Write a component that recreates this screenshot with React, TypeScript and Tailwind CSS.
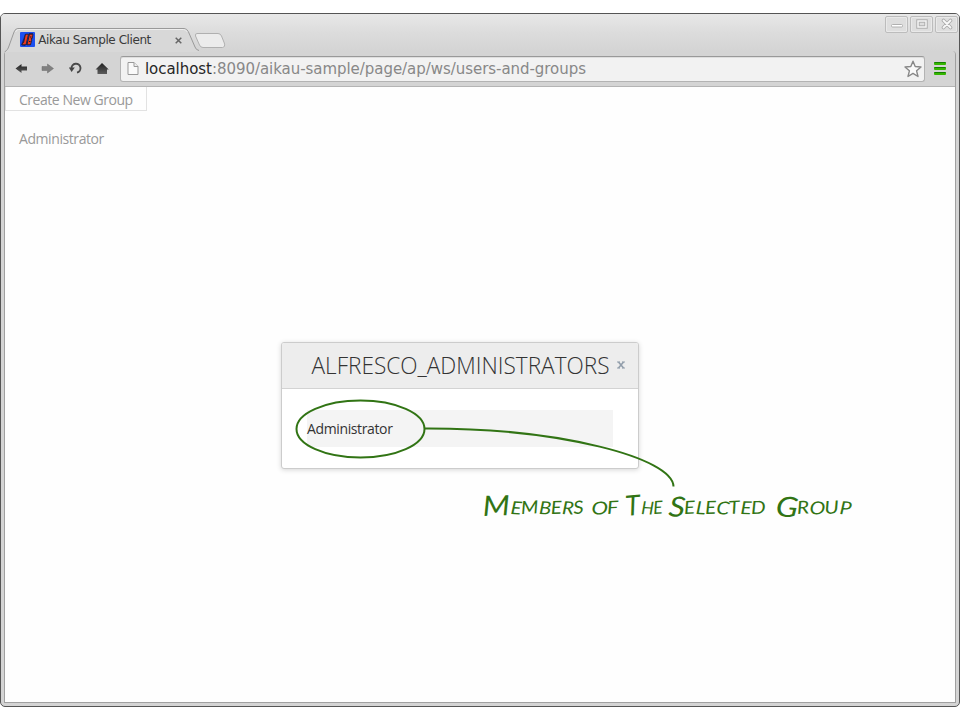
import React from "react";

function TabStrip() {
  return (
    <div className="relative flex h-[37px] items-end bg-gradient-to-b from-[#e8e8e8] via-[#dcdcdc] to-[#d4d4d4]">
      <svg className="absolute left-0 top-0" width="240" height="38" viewBox="1 14 240 38">
        <path d="M4.5 52 C7 50.5 8 49 9 46 L14 32 Q15.200 28.500 18 28.500 H184 Q187 28.500 188.500 32 L195 47 Q196 50 199 50.500 V52Z" fill="#d8d8d8" />
        <path d="M4.500 52 C7 50.500 8 49 9 46 L14 32 Q15.200 28.500 18 28.500 H184 Q187 28.500 188.500 32 L195 47 Q196 50 199 50.500" fill="none" stroke="#999" />
        <path d="M15.500 32 Q16.500 29.500 18.500 29.500 H183.500 Q186 29.500 187.300 32" fill="none" stroke="#eee" />
        <path d="M197 33.500 H218 Q220.500 33.500 221.500 36 L224.300 43 Q225.500 47 222.500 47.500 H203 Q200.500 47.500 199.500 45 L195.500 36 Q195 33.500 197 33.500Z" fill="#ececec" stroke="#b0b0b0" />
      </svg>
      <div className="relative flex h-[24px] w-[190px] items-center pl-[19px] pr-[9px]">
        <svg className="mt-px" width="15" height="15" viewBox="0 0 15 15">
          <rect width="15" height="15" rx="1" fill="#1c4ff0" />
          <path d="M1 13 5 2 H8 L5 14Z M9 1H13L12 6 11 8 11 13H6L8 8Z" fill="#142a80" />
          <path d="M5.500 2.200 H8.500 L6 12.800 H2 L2.800 10.600 H3.600Z" fill="#f03a1c" stroke="#151a35" strokeWidth=".8" />
          <path d="M9.500 2.200 H13 L12.200 6.500 H11.200 L11.800 8 L10.500 12.800 H7Z" fill="#f03a1c" stroke="#151a35" strokeWidth=".8" />
          <path d="M10 5h1.500M9 9.500h1.500" stroke="#151a35" />
        </svg>
        <svg className="ml-[3px] block overflow-visible" width="114" height="24">
          <text x="0.300" y="17.200" textLength="113" fill="#3a3a3a" fontSize="12" fontFamily="DejaVu Sans, sans-serif">Aikau Sample Client</text>
        </svg>
        <svg className="ml-auto mt-[2px]" width="7" height="7" viewBox="0 0 7 7">
          <path d="M.7 .7 6.300 6.300M6.300 .7 .7 6.300" stroke="#666" strokeWidth="1.500" />
        </svg>
      </div>
      <div className="ml-auto flex gap-[2px] self-start pr-[1px] pt-[2px]">
        {["min", "max", "close"].map((kind) => (
          <div key={kind} className="flex h-[17px] w-[23px] items-center justify-center rounded-[2px] border border-[#bcbcbc] bg-[#dedede] shadow-[inset_0_0_0_1px_#e9e9e9]">
            <svg width="14" height="13" viewBox="0 0 14 13">
              {kind === "min" && <rect x="1.500" y="6.500" width="11" height="2.500" rx="1" fill="#fff" stroke="#b0b0b0" />}
              {kind === "max" && (
                <g fill="none">
                  <rect x="3" y="3" width="8" height="6" stroke="#b0b0b0" strokeWidth="3.500" />
                  <rect x="3" y="3" width="8" height="6" stroke="#f5f5f5" strokeWidth="1.500" />
                </g>
              )}
              {kind === "close" && (
                <g strokeLinecap="round">
                  <path d="M3.500 2.500 10.500 9.500M10.500 2.500 3.500 9.500" stroke="#aaa" strokeWidth="3.600" />
                  <path d="M3.500 2.500 10.500 9.500M10.500 2.500 3.500 9.500" stroke="#f8f8f8" strokeWidth="1.800" />
                </g>
              )}
            </svg>
          </div>
        ))}
      </div>
    </div>
  );
}

function Toolbar() {
  return (
    <div className="flex h-[36px] items-center rounded-tr-[4px] border-b border-[#b4b4b4] bg-[#d4d4d4]">
      <svg className="shrink-0" width="115" height="34" viewBox="5 52 115 34">
        <defs>
          <linearGradient id="ink" x1="0" y1="0" x2="0" y2="1">
            <stop stopColor="#222" />
            <stop offset="1" stopColor="#5c5c5c" />
          </linearGradient>
        </defs>
        <path d="M15.500 68.500 21.500 64 V66.500 H27 V70.500 H21.500 V73Z" fill="url(#ink)" />
        <path d="M53.500 68.500 47.500 64 V66.500 H42 V70.500 H47.500 V73Z" fill="#808080" stroke="#6c6c6c" strokeWidth=".5" />
        <path d="M71.500 68.500 A4.500 4.500 0 1 1 77 72.600" fill="none" stroke="#4a4a4a" strokeWidth="1.900" />
        <path d="M68.800 67.500 H74.800 L71.600 71.900Z" fill="#444" />
        <path d="M102 63 108.800 69.500 H107 V74 H97.500 V69.500 H95.500Z" fill="url(#ink)" />
      </svg>
      <div className="flex h-[26px] w-[805px] items-center rounded-[3px] border border-[#b3b3b3] border-t-[#999] bg-[#f2f2f2] pl-[6px] pr-[2px] shadow-[inset_0_1px_0_#dedede]">
        <svg width="12" height="15" viewBox="0 0 12 15">
          <path d="M1 1.500 H7 L11 5.500 V13.500 H1Z" fill="#fafafa" stroke="#999" />
          <path d="M7 1.500 V5.500 H11" fill="#eee" stroke="#999" />
        </svg>
        <svg className="ml-[6px] overflow-visible" width="442" height="24">
          <text x="0" y="17" textLength="441" fontFamily="DejaVu Sans, sans-serif" fontSize="15" fill="#888">
            <tspan fill="#262626">localhost</tspan>:8090/aikau-sample/page/ap/ws/users-and-groups
          </text>
        </svg>
        <svg className="ml-auto" width="18" height="18" viewBox="0 0 18 18">
          <path d="M9 1.200 11.200 6.500 17 7 12.600 10.800 14 16.500 9 13.400 4 16.500 5.400 10.800 1 7 6.800 6.500Z" fill="#fafafa" stroke="#888" strokeWidth="1.400" strokeLinejoin="round" />
        </svg>
      </div>
      <div className="ml-[9px] flex w-[12px] flex-col gap-[2px]">
        <div className="h-[3px] rounded-[1px] border-t border-[#158000] bg-[#35b600]" />
        <div className="h-[3px] rounded-[1px] border-t border-[#158000] bg-[#35b600]" />
        <div className="h-[3px] rounded-[1px] border-t border-[#158000] bg-[#35b600]" />
      </div>
    </div>
  );
}

function GroupDialog() {
  return (
    <div className="absolute left-[281px] top-[342px] h-[127px] w-[358px] overflow-hidden rounded-[3px] border border-[#ccc] bg-white shadow-[0_1px_5px_rgba(0,0,0,0.16)]">
      <div className="flex h-[46px] items-center border-b border-[#d3d3d3] bg-[#ededed] pl-[29px]">
        <svg className="overflow-visible" width="298" height="45">
          <text x="0.500" y="30.500" textLength="298" lengthAdjust="spacingAndGlyphs" fontFamily="Open Sans, sans-serif" fontWeight="300" fontSize="23.500" fill="#333">ALFRESCO_ADMINISTRATORS</text>
        </svg>
        <svg className="ml-[8px] mt-[-1px]" width="8" height="8" viewBox="0 0 8 8">
          <path d="M0 1H3M5 1H8M0 7H3M5 7H8" stroke="#929eab" fill="none" />
          <path d="M1.500 1 6.500 7M6.500 1 1.500 7" stroke="#929eab" strokeWidth="1.600" fill="none" />
        </svg>
      </div>
      <div className="ml-[25px] mt-[21px] flex h-[37px] w-[306px] items-center bg-[#f4f4f4] pb-px">
        <span className="text-[14px] tracking-[-0.37px] text-[#333]">Administrator</span>
      </div>
    </div>
  );
}

const words = [
  { text: "Members", x: 483, width: 101, tilt: "-2 4 -3 3 -2 3 -4" },
  { text: "of", x: 591, width: 28, tilt: "4 -3" },
  { text: "The", x: 626, width: 37, tilt: "-5 3 -3" },
  { text: "Selected", x: 668, width: 98, tilt: "5 -3 3 -2 4 -4 2 -2" },
  { text: "Group", x: 775, width: 76, tilt: "5 -3 3 -3 4" },
];

function Annotation() {
  return (
    <svg className="pointer-events-none absolute left-0 top-0" width="960" height="720">
      <g fill="none" stroke="#317414" strokeWidth="2">
        <ellipse cx="360.500" cy="429" rx="64" ry="28.500" />
        <path d="M425 428.500 C560 428 673 458 673.500 486.500" />
      </g>
      {words.map((w) => (
        <text key={w.text} x={w.x} y="514" rotate={w.tilt} textLength={w.width} lengthAdjust="spacingAndGlyphs" fill="#317414" fontFamily="Lato, sans-serif" fontStyle="italic" fontSize="18">
          {w.text === "of" ? "OF" : <><tspan fontSize="28" dy="2">{w.text[0]}</tspan><tspan dy="-2">{w.text.slice(1).toUpperCase()}</tspan></>}
        </text>
      ))}
    </svg>
  );
}

export default function App() {
  return (
    <div className="relative h-[720px] w-[960px] overflow-hidden bg-white pt-[13px] font-['Open_Sans',sans-serif]">
      <div className="flex h-[694px] flex-col overflow-hidden rounded-[5px] border border-[#555] bg-[#d4d4d4]">
        <TabStrip />
        <div className="mx-[3px] mb-[3px] flex min-h-0 flex-1 flex-col rounded-t-[4px] border border-t-0 border-[#a0a0a0]">
          <Toolbar />
          <div className="flex flex-1 flex-col items-start bg-[#fefefe]">
            <div className="flex h-[24px] w-[142px] items-center whitespace-nowrap border border-t-0 border-[#e2e2e2] pl-[13px] pt-px text-[14px] tracking-[-0.46px] text-[#999]">Create New Group</div>
            <div className="ml-[14px] mt-[18px] text-[14px] leading-[20px] tracking-[-0.42px] text-[#999]">Administrator</div>
          </div>
        </div>
      </div>
      <GroupDialog />
      <Annotation />
    </div>
  );
}
